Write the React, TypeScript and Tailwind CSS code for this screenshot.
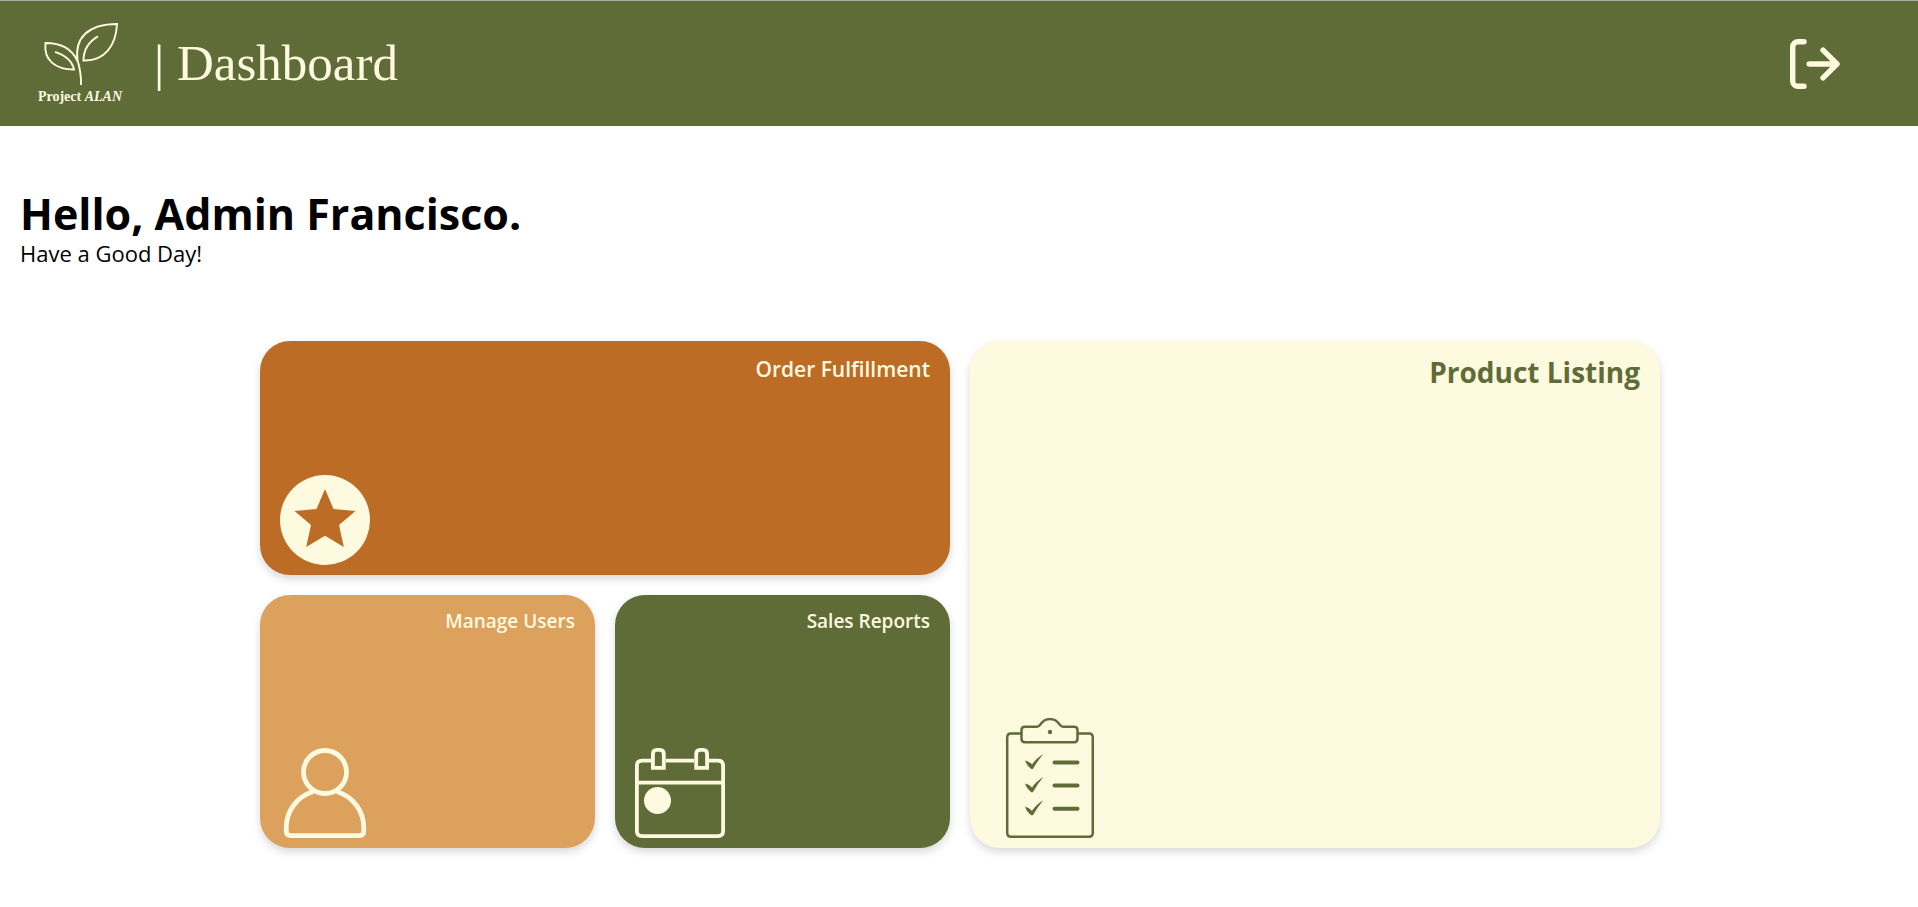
import type { ReactNode } from "react";

const cream = "#fefae0";
const olive = "#606c38";

function Logo() {
  return (
    <a href="#home" className="flex w-[100px] flex-col items-center pb-1 text-[#fefae0]">
      <svg
        viewBox="30 17 100 70"
        className="h-[70px] w-[100px]"
        fill="none"
        stroke="currentColor"
        strokeWidth="1.9"
        aria-hidden="true"
      >
        <path d="M81 85C81.500 75 79.500 67 77.500 60C74.500 38 88 24 117 24C116 46 104 61.500 83.500 60.500C83.500 50 88 42 98 36.300" />
        <path d="M77.500 61C72 49 61 43 45.500 43C43.500 60 55 69.500 74 69.500C72.500 62 66 55.500 55 51.800" />
      </svg>
      <span className="font-[Liberation_Serif,serif] text-sm leading-5 font-bold whitespace-nowrap">
        Project <em>ALAN</em>
      </span>
    </a>
  );
}

function LogoutIcon() {
  return (
    <svg
      viewBox="0 0 50 50"
      className="size-[50px]"
      fill="none"
      stroke="currentColor"
      strokeWidth="5.4"
      strokeLinecap="round"
      strokeLinejoin="round"
      aria-hidden="true"
    >
      <path d="M14 2.700H8A5.300 5.300 0 0 0 2.700 8V42A5.300 5.300 0 0 0 8 47.300H14" />
      <path d="M19.200 25H46.500M33 11.200L47 25L33 38.800" />
    </svg>
  );
}

function StarIcon() {
  return (
    <svg viewBox="0 0 90 90" className="size-[90px]" aria-hidden="true">
      <circle cx="45" cy="45" r="45" fill={cream} />
      <path
        d="M45 14L53.500 34L75.500 36L59 50L63.800 72L45 60.800L26.200 72L31 50L14.500 36L36.500 34Z"
        fill="#bc6c25"
      />
    </svg>
  );
}

function UserIcon() {
  return (
    <svg
      viewBox="0 0 90 90"
      className="size-[90px]"
      fill="none"
      stroke={cream}
      strokeWidth="4.800"
      aria-hidden="true"
    >
      <circle cx="45" cy="24" r="21.500" />
      <path d="M33 43.800C17 48.500 6.200 63 6.200 80V83Q6.200 87.600 10.800 87.600H79.200Q83.800 87.600 83.800 83V80C83.800 63 73 48.500 57 43.800" />
    </svg>
  );
}

function CalendarIcon() {
  return (
    <svg
      viewBox="0 0 90 90"
      className="size-[90px]"
      fill="none"
      stroke={cream}
      strokeWidth="3.800"
      aria-hidden="true"
    >
      <path d="M16 12.600H7Q1.900 12.600 1.900 17.700V83Q1.900 88.100 7 88.100H83Q88.100 88.100 88.100 83V17.700Q88.100 12.600 83 12.600H74M31 12.600H59" />
      <path d="M1.900 34.600H88.100" />
      <path d="M17.900 19.800V6Q17.900 1.900 22 1.900H24.700Q28.800 1.900 28.800 6V19.800Z" />
      <path d="M61.200 19.800V6Q61.200 1.900 65.300 1.900H68Q72.100 1.900 72.100 6V19.800Z" />
      <circle cx="22.500" cy="52.500" r="13.500" fill={cream} stroke="none" />
    </svg>
  );
}

function ClipboardIcon() {
  return (
    <svg
      viewBox="0 0 120 120"
      className="size-[120px]"
      fill="none"
      stroke={olive}
      strokeWidth="2.500"
      aria-hidden="true"
    >
      <path d="M31 15.500H21Q17.200 15.500 17.200 19.500V115Q17.200 118.700 21 118.700H99Q102.800 118.700 102.800 115V19.500Q102.800 15.500 99 15.500H88" />
      <path d="M35 8.700H47C49.500 8.700 50 7 51.500 5C56 -.200 64 -.200 68.500 5C70 7 70.500 8.700 73 8.700H84Q87.500 8.700 87.500 12V20.500Q87.500 24.300 84 24.300H35Q31.500 24.300 31.500 20.500V12Q31.500 8.700 35 8.700Z" />
      <circle cx="60" cy="14" r="2.200" fill={olive} stroke="none" />
      {[44.4, 67.6, 90.8].map((y) => (
        <g key={y} transform={`translate(0 ${y})`}>
          <path
            d="M35 -2Q39 -1.500 42 2Q46 -4 53.300 -8.500Q48 -2 43 6.300Q42 7.200 41 6.300Q36.500 3 35 -2Z"
            fill={olive}
            stroke="none"
          />
          <path d="M64.500 0H87.500" strokeWidth="4" strokeLinecap="round" />
        </g>
      ))}
    </svg>
  );
}

type CardProps = {
  href: string;
  className: string;
  label: ReactNode;
  icon: ReactNode;
};

function Card({ href, className, label, icon }: CardProps) {
  return (
    <a
      href={href}
      className={`flex flex-col justify-between rounded-[30px] px-5 pt-3 pb-2.5 shadow-[0_4px_8px_rgba(0,0,0,0.15)] ${className}`}
    >
      <h2 className="text-right">{label}</h2>
      {icon}
    </a>
  );
}

export default function App() {
  return (
    <div className="min-h-screen bg-white font-[Open_Sans,sans-serif] text-black">
      <header className="flex h-[126px] items-center justify-between border-t border-[#9fb3a4] bg-[#606c38] pr-[78px] pl-[30px] text-[#fefae0]">
        <div className="flex items-center gap-6">
          <Logo />
          <h1 className="font-[Liberation_Serif,serif] text-[51px] leading-none">
            | Dashboard
          </h1>
        </div>
        <button type="button" aria-label="Log out" className="cursor-pointer">
          <LogoutIcon />
        </button>
      </header>

      <main>
        <section className="px-5 pt-[63px]">
          <h2 className="text-[43px] leading-[50px] font-bold">Hello, Admin Francisco.</h2>
          <p className="text-[22px] leading-7 font-medium">Have a Good Day!</p>
        </section>

        <div className="pt-[74px] pl-0.5">
          <div className="mx-auto grid max-w-[1400px] grid-cols-2 gap-5">
            <div className="grid grid-cols-2 grid-rows-[234px_253px] gap-5">
              <Card
                href="#orders"
                className="col-span-2 bg-[#bc6c25] text-[21px] leading-8 font-semibold text-[#fefae0]"
                label="Order Fulfillment"
                icon={<StarIcon />}
              />
              <Card
                href="#users"
                className="bg-[#dda15e] text-[19px] leading-7 font-semibold text-[#fefae0]"
                label="Manage Users"
                icon={<UserIcon />}
              />
              <Card
                href="#reports"
                className="bg-[#606c38] text-[19px] leading-7 font-semibold text-[#fefae0]"
                label="Sales Reports"
                icon={<CalendarIcon />}
              />
            </div>
            <Card
              href="#products"
              className="bg-[#fefae0] text-[28px] leading-[38px] font-bold text-[#606c38]"
              label="Product Listing"
              icon={<ClipboardIcon />}
            />
          </div>
        </div>
      </main>
    </div>
  );
}
